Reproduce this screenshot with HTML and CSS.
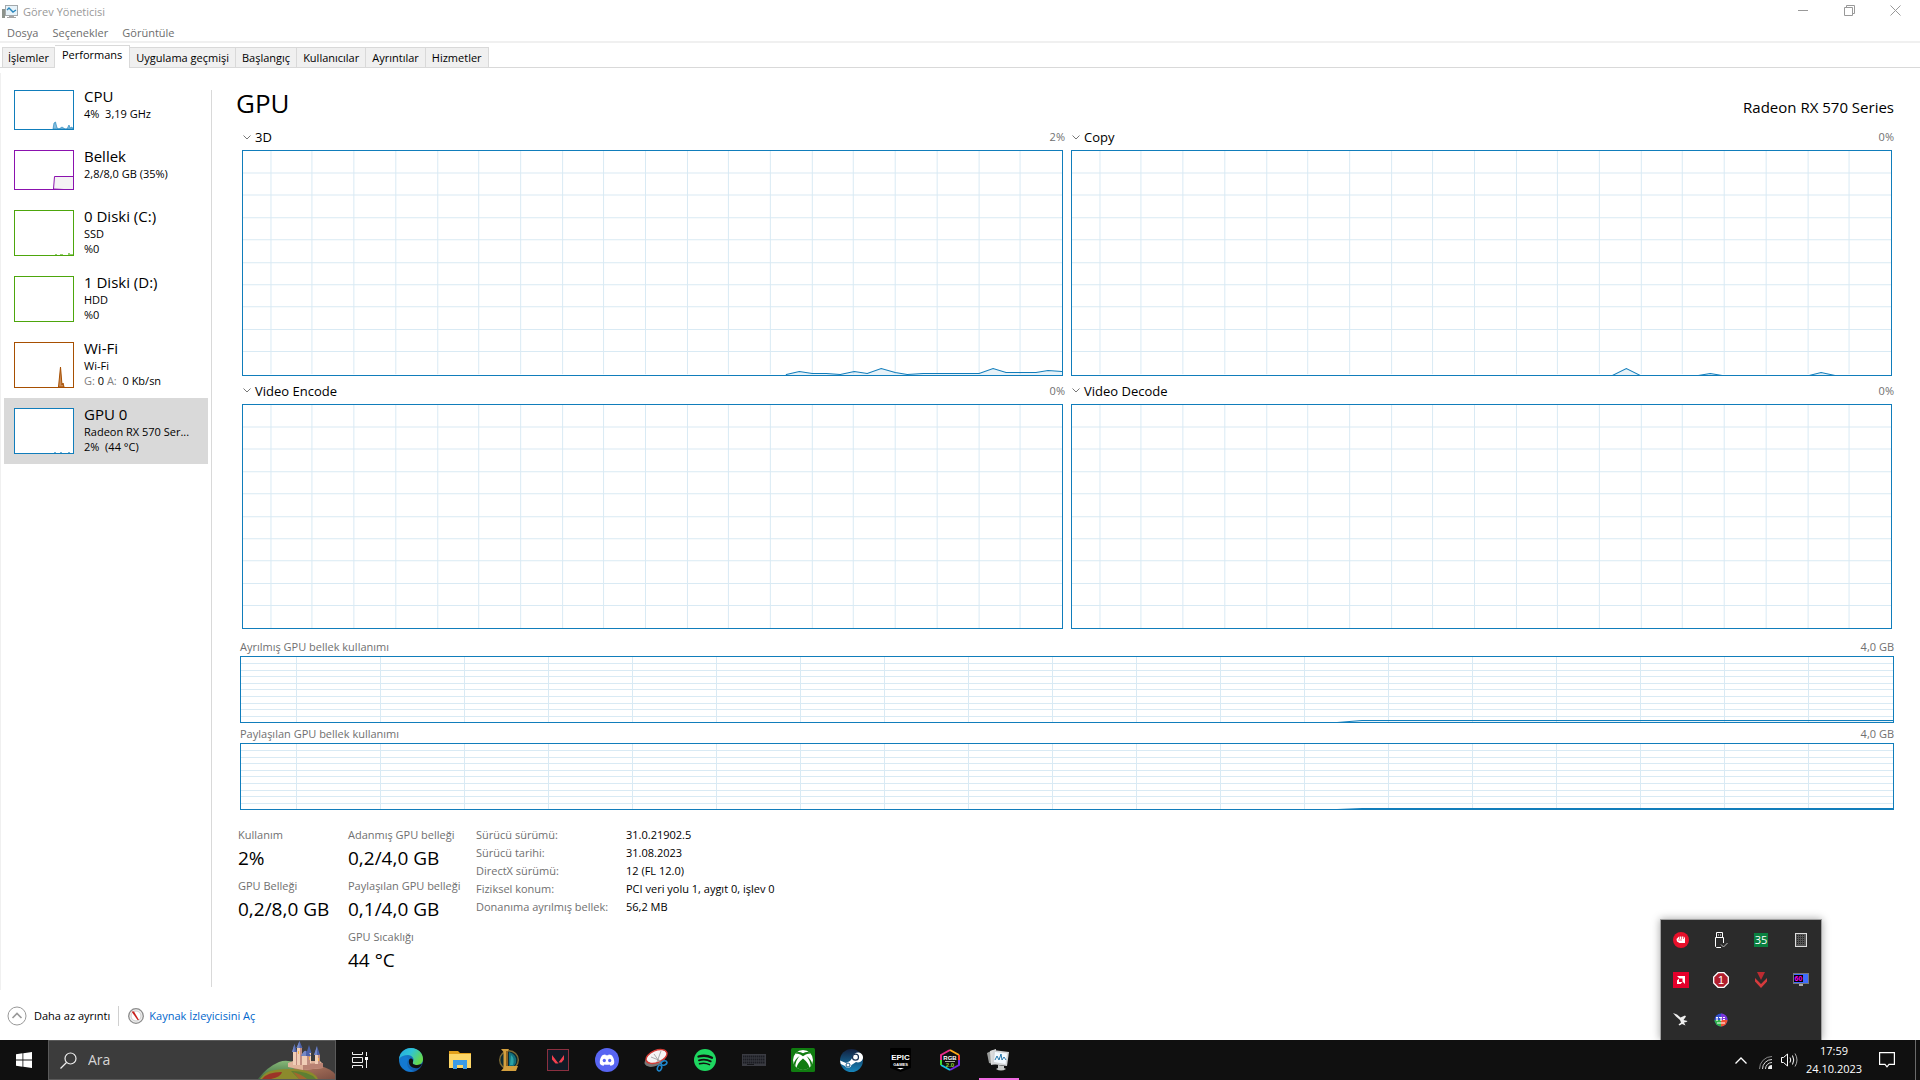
FILE: index.html
```html
<!DOCTYPE html>
<html lang="tr">
<head>
<meta charset="utf-8">
<title>Görev Yöneticisi</title>
<link rel="stylesheet" href="styles.css">
</head>
<body>
<svg class="defs" aria-hidden="true">
  <symbol id="grid-engine" viewBox="0 0 820 224" preserveAspectRatio="none">
    <path class="grid-line" d="M28 0V224M69 0V224M111 0V224M153 0V224M195 0V224M236 0V224M278 0V224M320 0V224M361 0V224M403 0V224M445 0V224M486 0V224M528 0V224M570 0V224M611 0V224M653 0V224M695 0V224M737 0V224M778 0V224M0 22H820M0 44H820M0 67H820M0 89H820M0 112H820M0 134H820M0 156H820M0 179H820M0 201H820"/>
  </symbol>
  <symbol id="grid-memory" viewBox="0 0 1652 65" preserveAspectRatio="none">
    <path class="grid-line" d="M55 0V65M139 0V65M223 0V65M307 0V65M391 0V65M475 0V65M559 0V65M643 0V65M727 0V65M811 0V65M895 0V65M979 0V65M1063 0V65M1147 0V65M1231 0V65M1315 0V65M1399 0V65M1483 0V65M1567 0V65M0 6H1652M0 13H1652M0 19H1652M0 26H1652M0 32H1652M0 39H1652M0 46H1652M0 52H1652M0 59H1652"/>
  </symbol>
  <symbol id="chevron" viewBox="0 0 8 5"><path d="M.5 .5L4 4L7.500 .5" fill="none" stroke="#777"/></symbol>
</svg>

<div class="window">
  <header class="titlebar">
    <svg class="app-icon" width="16" height="16" viewBox="0 0 16 16"><rect x="0" y="5" width="3" height="9" fill="#8d938c"/><rect x="3.500" y="1.500" width="12" height="10" fill="#e7f3fa" stroke="#a3a8ab"/><path d="M5 6l2-2 4 4 3-2" fill="none" stroke="#2b87bd" stroke-width="1.400"/><path d="M7 12h5v1h2v1H5v-1h2z" fill="#a5a5a5"/></svg>
    <h1 class="window-title">Görev Yöneticisi</h1>
    <div class="caption-buttons">
      <button aria-label="Simge durumuna küçült"><svg width="11" height="11" viewBox="0 0 11 11"><path d="M0 5.500H10"/></svg></button>
      <button aria-label="Önceki boyut"><svg width="11" height="11" viewBox="0 0 11 11"><path d="M.5 2.500H8.500V10.500H.5ZM2.500 2.500V.5H10.500V8.500H8.500"/></svg></button>
      <button aria-label="Kapat"><svg width="11" height="11" viewBox="0 0 11 11"><path d="M.5 .5L10.500 10.500M10.500 .5L.5 10.500"/></svg></button>
    </div>
  </header>
  <nav class="menubar"><button>Dosya</button><button>Seçenekler</button><button>Görüntüle</button></nav>
  <div class="tabs" role="tablist">
    <button role="tab">İşlemler</button>
    <button role="tab" class="active" aria-selected="true">Performans</button>
    <button role="tab">Uygulama geçmişi</button>
    <button role="tab">Başlangıç</button>
    <button role="tab">Kullanıcılar</button>
    <button role="tab">Ayrıntılar</button>
    <button role="tab">Hizmetler</button>
  </div>

  <div class="body">
    <aside class="sidebar">
      <button class="resource">
        <svg class="thumb cpu" viewBox="0 0 58 38"><path d="M38 38L39 32L40.500 31L42 37L44 38L47 36L50 38L52 38L54 34L55 37L57 36L58 38Z" fill="#117dbb" fill-opacity=".5" stroke="#117dbb" stroke-width=".6"/></svg>
        <span class="info"><span class="name">CPU</span><span>4%&nbsp; 3,19 GHz</span></span>
      </button>
      <button class="resource">
        <svg class="thumb memory" viewBox="0 0 58 38"><path d="M38.500 38L39.500 25.500H59V39Z" fill="#f4f2f4" stroke="#8b12ae" stroke-width="1"/></svg>
        <span class="info"><span class="name">Bellek</span><span>2,8/8,0 GB (35%)</span></span>
      </button>
      <button class="resource">
        <svg class="thumb disk tall" viewBox="0 0 58 44"><path d="M40 43.500H42M45 43.500H48M53 42.500H55M53 43.500H58" stroke="#4da60c" stroke-opacity=".6"/></svg>
        <span class="info"><span class="name">0 Diski (C:)</span><span>SSD</span><span>%0</span></span>
      </button>
      <button class="resource">
        <svg class="thumb disk tall" viewBox="0 0 58 44"></svg>
        <span class="info"><span class="name">1 Diski (D:)</span><span>HDD</span><span>%0</span></span>
      </button>
      <button class="resource">
        <svg class="thumb wifi tall" viewBox="0 0 58 44"><path d="M43.500 44L45.500 24L47 42L48 40L49 44Z" fill="#c98b58" stroke="#a74f01"/></svg>
        <span class="info"><span class="name">Wi-Fi</span><span>Wi-Fi</span><span><i>G:</i> 0 <i>A:</i>&nbsp; 0 Kb/sn</span></span>
      </button>
      <button class="resource selected">
        <svg class="thumb gpu tall" viewBox="0 0 58 44"><path d="M39 43.500H41M45 43.500H47M53 43.500H55" stroke="#117dbb" stroke-opacity=".6"/></svg>
        <span class="info"><span class="name">GPU 0</span><span>Radeon RX 570 Ser...</span><span>2%&nbsp; (44 °C)</span></span>
      </button>
    </aside>

    <main class="content">
      <div class="heading"><h2>GPU</h2><span>Radeon RX 570 Series</span></div>
      <div class="engines">
        <section class="engine">
          <div class="engine-head"><button><svg width="8" height="5"><use href="#chevron"/></svg>3D</button><span>2%</span></div>
          <svg class="plot" viewBox="0 0 820 224" preserveAspectRatio="none"><use href="#grid-engine" width="820" height="224"/><path class="series" d="M544 224L557 221L570 223L584 223L598 224L612 221L625 223L639 218L653 222L665 224L681 223L737 223L751 218L764 222L794 222L806 220L822 221V226H544Z"/></svg>
        </section>
        <section class="engine">
          <div class="engine-head"><button><svg width="8" height="5"><use href="#chevron"/></svg>Copy</button><span>0%</span></div>
          <svg class="plot" viewBox="0 0 820 224" preserveAspectRatio="none"><use href="#grid-engine" width="820" height="224"/><path class="series" d="M541 225L555 218L569 225Z"/><path class="series" d="M627 225L639 223L651 225ZM738 225L750 222L764 225Z"/></svg>
        </section>
        <section class="engine">
          <div class="engine-head"><button><svg width="8" height="5"><use href="#chevron"/></svg>Video Encode</button><span>0%</span></div>
          <svg class="plot" viewBox="0 0 820 224" preserveAspectRatio="none"><use href="#grid-engine" width="820" height="224"/></svg>
        </section>
        <section class="engine">
          <div class="engine-head"><button><svg width="8" height="5"><use href="#chevron"/></svg>Video Decode</button><span>0%</span></div>
          <svg class="plot" viewBox="0 0 820 224" preserveAspectRatio="none"><use href="#grid-engine" width="820" height="224"/></svg>
        </section>
      </div>
      <section class="memory-chart">
        <div class="memory-head first"><span>Ayrılmış GPU bellek kullanımı</span><span>4,0 GB</span></div>
        <svg class="plot" viewBox="0 0 1652 65" preserveAspectRatio="none"><use href="#grid-memory" width="1652" height="65"/><path class="series" d="M1096 65.500L1121 63.500H1654V66H1096Z"/></svg>
      </section>
      <section class="memory-chart">
        <div class="memory-head"><span>Paylaşılan GPU bellek kullanımı</span><span>4,0 GB</span></div>
        <svg class="plot" viewBox="0 0 1652 65" preserveAspectRatio="none"><use href="#grid-memory" width="1652" height="65"/><path class="series" d="M1096 65.500L1121 64.500H1654V66H1096Z"/></svg>
      </section>
      <div class="stats">
        <dl class="figures">
          <dt>Kullanım</dt><dd>2%</dd>
          <dt>GPU Belleği</dt><dd>0,2/8,0 GB</dd>
        </dl>
        <dl class="figures">
          <dt>Adanmış GPU belleği</dt><dd>0,2/4,0 GB</dd>
          <dt>Paylaşılan GPU belleği</dt><dd>0,1/4,0 GB</dd>
          <dt>GPU Sıcaklığı</dt><dd>44 °C</dd>
        </dl>
        <dl class="details">
          <dt>Sürücü sürümü:</dt><dd>31.0.21902.5</dd>
          <dt>Sürücü tarihi:</dt><dd>31.08.2023</dd>
          <dt>DirectX sürümü:</dt><dd>12 (FL 12.0)</dd>
          <dt>Fiziksel konum:</dt><dd>PCI veri yolu 1, aygıt 0, işlev 0</dd>
          <dt>Donanıma ayrılmış bellek:</dt><dd>56,2 MB</dd>
        </dl>
      </div>
    </main>
  </div>

  <footer class="footer">
    <button class="less"><svg width="20" height="20" viewBox="0 0 20 20" fill="none"><circle cx="10" cy="10" r="9" stroke="#999"/><path d="M5.500 12L10 7.500L14.500 12" stroke="#999" stroke-width="1.600"/></svg>Daha az ayrıntı</button>
    <a href="#"><svg width="16" height="16" viewBox="0 0 16 16"><circle cx="8" cy="8" r="7.300" fill="#eee" stroke="#8c8c8c" stroke-width="1.300"/><circle cx="8" cy="8" r="5" fill="#fff" stroke="#ccc"/><path d="M3.500 3.500L6 3.500L11 12L9.500 12Z" fill="#c8201c"/></svg>Kaynak İzleyicisini Aç</a>
  </footer>
</div>

<div class="taskbar">
  <button class="start" aria-label="Başlat"><svg width="16" height="16" viewBox="0 0 16 16" fill="#fff"><path d="M0 2.200L6.500 1.300V7.600H0ZM7.300 1.200L16 0V7.600H7.300ZM0 8.400H6.500V14.700L0 13.800ZM7.300 8.400H16V16L7.300 14.800Z"/></svg></button>
  <label class="search">
    <svg width="17" height="17" viewBox="0 0 17 17" fill="none" stroke="#eee" stroke-width="1.200"><circle cx="10.500" cy="6.500" r="5.500"/><path d="M6.500 10.500L.5 16.500"/></svg>
    <input type="text" placeholder="Ara" aria-label="Ara">
    <svg class="castle" width="78" height="38" viewBox="0 0 78 38">
      <defs>
        <linearGradient id="hill" x1="0" y1="0" x2="0" y2="1"><stop stop-color="#86b878"/><stop offset="1" stop-color="#3f6b3f"/></linearGradient>
        <linearGradient id="slope" x1="0" y1="0" x2="1" y2="1"><stop stop-color="#b57c64"/><stop offset="1" stop-color="#7c4f42"/></linearGradient>
      </defs>
      <path d="M1 38Q10 26 22 21Q30 18 38 22Q50 28 56 38Z" fill="url(#hill)"/>
      <path d="M36 27Q52 24 64 25Q74 28 78 33V38H52Z" fill="url(#slope)"/>
      <path d="M3 38Q8 30 18 29Q32 27 46 29Q58 31 61 38Z" fill="#8c8a2c"/>
      <path d="M5 38Q10 31 25 31Q24 36 14 38Z" fill="#9c3427"/>
      <path d="M34 30Q52 30 59 38H42Z" fill="#5d7f33"/>
      <path d="M36 31Q44 33 50 38H42Z" fill="#a2672e"/>
      <path d="M31 22L36 20H63L66 23V27L46 29L31 26Z" fill="#e0b39a"/>
      <path d="M46 23L66 22V27L46 29Z" fill="#b98273"/>
      <path d="M36 11H40V24H36ZM40 6H45V24H40ZM45 14H53V24H45ZM51 12H54V22H51ZM58 13H63V23H58Z" fill="#f0cdb6"/>
      <path d="M43 6H45V24H43ZM50 14H53V24H50ZM61 13H63V23H61ZM39 11H40V24H39Z" fill="#c08c80"/>
      <path d="M37.500 3L40 11H35ZM42.500 0L45.500 7H39.500ZM52 4L54.500 12H49.500ZM60 5L63 14H57ZM44 15Q49 5 54 15Z" fill="#4b61a8"/>
      <path d="M42.500 0V7H39.500ZM60 5V14H57ZM37.500 3V11H35ZM44 15Q47 9 49 10V15Z" fill="#7688c4"/>
      <path d="M41 10H42V13H41ZM52 16H53V19H52ZM61 17H62V20H61Z" fill="#f4b54c"/>
    </svg>
  </label>
  <button class="task-view" aria-label="Görev Görünümü"><svg width="17" height="16" viewBox="0 0 17 16" fill="none" stroke="#eee"><path d="M.5 0V2.500H10.500V0M.5 16V13.500H10.500V16M.5 5.500H10.500V10.500H.5ZM14.500 0V4M14.500 8V16"/><path d="M13 5H16V8H13Z" fill="#fff" stroke="none"/></svg></button>
  <div class="apps">
    <button aria-label="Microsoft Edge"><svg width="24" height="24" viewBox="0 0 24 24"><defs><linearGradient id="edge-top" x1="0" y1="0" x2="1" y2=".5"><stop stop-color="#25a7df"/><stop offset=".5" stop-color="#2fc4d6"/><stop offset="1" stop-color="#65d94e"/></linearGradient><linearGradient id="edge-base" x1="0" y1="0" x2="1" y2="1"><stop stop-color="#1889d8"/><stop offset="1" stop-color="#124e9f"/></linearGradient></defs><circle cx="12" cy="12" r="12" fill="url(#edge-base)"/><path d="M0 11C1 4 6 0 12 0C19 0 24 5 24 11C24 15 21 17 18 17C15 17 13 16 14 14C16 11 13 7 9 7C5 7 2 8 0 11Z" fill="url(#edge-top)"/><path d="M14 14C13 16 15 17 18 17C20 17 22 16 23 16C22 19 19 21 16 20C12 20 9 16 10 12C11 10 13 10 14 12Z" fill="#111"/><path d="M10 11C6 14 8 22 16 23C9 26 1 20 1 14C2 9 7 7 10 11Z" fill="#1379d2"/></svg></button>
    <button aria-label="Dosya Gezgini"><svg width="22" height="20" viewBox="0 0 22 20"><path d="M0 1H9L11 3H22V18H0Z" fill="#e3a01b"/><path d="M0 4H22V18H0Z" fill="#fdd667"/><path d="M4 19V10H18V19H14V15H8V19Z" fill="#3c9be5"/></svg></button>
    <button aria-label="League of Legends"><svg width="22" height="24" viewBox="0 0 22 24"><circle cx="11" cy="12" r="9.300" fill="#0b2a33" stroke="#7d6a35" stroke-width="1.400"/><path d="M11 4Q20 7 18 15L16 18H11Z" fill="#13707d"/><path d="M13 7Q17 10 15 17H12Z" fill="#2ba3a6"/><path d="M3 1H11L10 3V18H20L18 23H3L5.500 20V4Z" fill="#d4a03e"/><path d="M8 3H10V18H8Z" fill="#8f6322"/></svg></button>
    <button aria-label="Valorant"><svg width="22" height="22" viewBox="0 0 22 22"><rect x=".5" y=".5" width="21" height="21" fill="#111a26" stroke="#8b3040"/><path d="M5 6L11.500 14.500H8.500L5 10.500ZM17 6V10.500L14.500 13.500H11.500Z" fill="#f4404f"/></svg></button>
    <button aria-label="Discord"><svg width="24" height="24" viewBox="0 0 24 24"><circle cx="12" cy="12" r="12" fill="#5865f2"/><path d="M7 7.500Q9 6.400 10.300 6.500L10.800 7.300H13.200L13.700 6.500Q15.500 6.500 17 7.500Q20 12 19 16Q17.500 17.500 15.500 17.700L14.600 16.400Q12 17 9.400 16.400L8.500 17.700Q6.500 17.500 5 16Q4 12 7 7.500Z" fill="#fff"/><ellipse cx="9.300" cy="12.500" rx="1.600" ry="1.800" fill="#5865f2"/><ellipse cx="14.700" cy="12.500" rx="1.600" ry="1.800" fill="#5865f2"/></svg></button>
    <button aria-label="Ekran Alıntısı Aracı"><svg width="24" height="24" viewBox="0 0 24 24"><ellipse cx="11" cy="12" rx="11" ry="6" transform="rotate(-22 11 12)" fill="#777"/><ellipse cx="12.500" cy="8.500" rx="11" ry="6" transform="rotate(-22 12.500 8.500)" fill="#f5f5f5" stroke="#d33b35" stroke-width="1.400"/><path d="M7 9L17 13M10 6L17 16M17 3L13 14" stroke="#999" stroke-width=".8"/><g fill="none" stroke="#1f86cc" stroke-width="1.600"><ellipse cx="20" cy="15" rx="3" ry="2" transform="rotate(-20 20 15)"/><ellipse cx="15.500" cy="20" rx="2" ry="3" transform="rotate(20 15.500 20)"/></g></svg></button>
    <button aria-label="Spotify"><svg width="22" height="22" viewBox="0 0 22 22"><circle cx="11" cy="11" r="11" fill="#1ed760"/><g fill="none" stroke="#111" stroke-linecap="round"><path d="M4.500 7.500Q12 5.500 18 8.800" stroke-width="2.300"/><path d="M5 11.300Q11.500 9.500 16.700 12.300" stroke-width="1.900"/><path d="M5.500 14.800Q11 13.400 15.500 15.700" stroke-width="1.500"/></g></svg></button>
    <button aria-label="Klavye"><svg width="24" height="12" viewBox="0 0 24 12"><rect width="24" height="12" fill="#3a3b42"/><path d="M1 2.500H23M1 5.500H23M1 8.500H23" stroke="#1b1c22" stroke-width="2" stroke-dasharray="1.500 .5"/><path d="M5 10.500H12" stroke="#17181b"/></svg></button>
    <button aria-label="Xbox"><svg width="24" height="24" viewBox="0 0 24 24"><rect width="24" height="24" rx="1.500" fill="#107c10"/><circle cx="12" cy="12" r="10" fill="#fff"/><path d="M5.500 4.300Q8.500 3.200 12 5.300Q15.500 3.200 18.500 4.300Q20 6 17 5.800Q15 6 12 8.300Q9 6 7 5.800Q4 6 5.500 4.300Z" fill="#107c10"/><path d="M8.600 8Q4.500 12.500 4.300 18.600L2.800 16Q3.500 11.500 8.600 8ZM15.400 8Q19.500 12.500 19.700 18.600L21.200 16Q20.500 11.500 15.400 8Z" fill="#107c10"/><path d="M12 10.500Q17.500 15 18.500 19.500Q15.500 22 12 22Q8.500 22 5.500 19.500Q6.500 15 12 10.500Z" fill="#107c10"/></svg></button>
    <button aria-label="Steam"><svg width="23" height="23" viewBox="0 0 23 23"><defs><linearGradient id="steam" x1="0" y1="0" x2="0" y2="1"><stop stop-color="#12203f"/><stop offset="1" stop-color="#1685bb"/></linearGradient></defs><circle cx="11.500" cy="11.500" r="11.500" fill="url(#steam)"/><path d="M0 11.500L6 14L10 12L13 8A5 5 0 1 1 16 13L11.500 16A3.500 3.500 0 0 1 5 17L.8 15Z" fill="#fff"/><circle cx="15.500" cy="8.200" r="3" fill="#fff" stroke="#173052" stroke-width="1.200"/><circle cx="8" cy="16" r="2" fill="#fff" stroke="#1a5b88"/></svg></button>
    <button aria-label="Epic Games"><svg width="21" height="24" viewBox="0 0 21 24"><path d="M0 1Q0 0 1 0H20Q21 0 21 1V20L10.500 24L0 20Z" fill="#000"/><text x="10.500" y="12" class="epic-name">EPIC</text><text x="10.500" y="18" class="epic-games">GAMES</text><path d="M7 20H14L10.500 21.500Z" fill="#fff"/></svg></button>
    <button aria-label="RGB Fusion"><svg width="22" height="22" viewBox="0 0 22 22"><g fill="none" stroke-width="2"><path d="M2 11V6L11 1" stroke="#e92c88"/><path d="M11 1L20 6" stroke="#ffab17"/><path d="M20 6V11" stroke="#ff3c2d"/><path d="M20 11V16L11 21" stroke="#7329e5"/><path d="M11 21L2 16" stroke="#19c5e8"/><path d="M2 16V11" stroke="#3ddb37"/></g><text x="11" y="11" class="rgb-name">RGB</text><path d="M6 12.500H16" stroke="#aaa"/><text x="11" y="18" class="rgb-version">2.0</text></svg></button>
    <button aria-label="Görev Yöneticisi" class="running"><svg width="24" height="22" viewBox="0 0 24 22"><path d="M0 4L6 1V15L2 14Z" fill="#9b9d9b"/><path d="M3 2L9 0V15L4 16Z" fill="#dcdcdc"/><path d="M6 1L22 3L20 17L5 15Z" fill="#d3d5d7"/><path d="M8 3L20 4.500L18.500 15L7 13Z" fill="#f4faff"/><path d="M8 11L10 7L12 11L14 5L15 11L17 8L19 11" fill="none" stroke="#2476aa"/><path d="M11 16L17 17V19L19 20Q14 23 9 20L11 19Z" fill="#c8cac9"/></svg></button>
  </div>
  <div class="tray">
    <button class="tray-up" aria-label="Gizli simgeleri göster"><svg width="12" height="7" viewBox="0 0 12 7" fill="none" stroke="#fff" stroke-width="1.300"><path d="M.5 6.500L6 1L11.500 6.500"/></svg></button>
    <button class="tray-wifi" aria-label="Ağ"><svg width="13" height="13" viewBox="0 0 13 13" fill="none" stroke="#aaa"><path d="M.5 13A12.500 12.500 0 0 1 13 .5" stroke="#888"/><path d="M3.500 13A9.500 9.500 0 0 1 13 3.500M6.500 13A6.500 6.500 0 0 1 13 6.500" stroke="#ddd"/><path d="M9 13A4 4 0 0 1 13 9V13Z" fill="#eee" stroke="none"/></svg></button>
    <button class="tray-sound" aria-label="Ses"><svg width="17" height="14" viewBox="0 0 17 14" fill="none" stroke="#fff"><path d="M.5 4.500H2.500L6.500 1V13L2.500 9.500H.5Z"/><path d="M9 4.500Q10.500 7 9 9.500M11.500 2.500Q14 7 11.500 11.500"/><path d="M14 .5Q18 7 14 13.500" stroke="#aaa"/></svg></button>
    <button class="clock"><time>17:59</time><span>24.10.2023</span></button>
    <button class="notify" aria-label="Bildirimler"><svg width="16" height="16" viewBox="0 0 16 16" fill="none" stroke="#fff" stroke-width="1.200"><path d="M.6 .6H15.400V12.400H10L8 14.800L6 12.400H.6Z"/></svg></button>
    <button class="show-desktop" aria-label="Masaüstünü göster"></button>
  </div>

  <div class="tray-popup">
    <button aria-label="MSI"><svg width="16" height="16" viewBox="0 0 16 16"><circle cx="8" cy="8" r="8" fill="#e7102a"/><path d="M3.500 7L5 5.500L6 4.500H11L12 6V11H6.500L4 9.500Z" fill="#fff"/><path d="M6.500 4V7M8.500 4V7M10.500 4V7M5 8H9" stroke="#e7102a" stroke-width=".6"/></svg></button>
    <button aria-label="USB"><svg width="14" height="16" viewBox="0 0 14 16" fill="none" stroke="#fff"><path d="M2.500 5V.5H8.500V5M7 15.500H2.500L1.500 14.500V5.500H9.500V11"/><path d="M4 3H5M6 3H7"/><path d="M7 12.500L9.500 15L13.500 11" stroke="#bbb"/></svg></button>
    <button aria-label="Sıcaklık 35"><span class="temp">35</span></button>
    <button aria-label="İşlemci"><svg width="12" height="14" viewBox="0 0 12 14"><rect x=".5" y=".5" width="11" height="13" fill="#555" stroke="#ddd"/><path d="M2 2.500H10M2 4.500H10M2 6.500H10M2 8.500H10M2 10.500H10" stroke="#222" stroke-dasharray="1 1"/></svg></button>
    <button aria-label="AMD"><svg width="16" height="16" viewBox="0 0 16 16"><rect width="16" height="16" fill="#e4002b"/><path d="M4 4H12V12L9.500 9.500V6.500H6.500ZM4 8.500L6 6.500V10H9.500L7.500 12H4Z" fill="#fff"/></svg></button>
    <button aria-label="Uyarı 1"><svg width="16" height="16" viewBox="0 0 16 16"><path d="M5 .7H11L15.300 5V11L11 15.300H5L.7 11V5Z" fill="#b01e2d" stroke="#fff" stroke-width="1.300"/><text x="8" y="12" class="badge-number">1</text></svg></button>
    <button aria-label="Vanguard"><svg width="12" height="16" viewBox="0 0 12 16"><path d="M2 0H10L6 8Z" fill="#bd2b31"/><path d="M0 6L6 12L12 6V9.500L6 16L0 9.500Z" fill="#d63b3d"/></svg></button>
    <button aria-label="60 Hz"><svg width="16" height="14" viewBox="0 0 16 14"><rect x=".5" y=".5" width="15" height="10" fill="#3e6dff" stroke="#777"/><rect x="1" y="2" width="9" height="7" fill="#000"/><text x="5.500" y="8" class="hertz">60</text><path d="M6 11H10V13H6Z" fill="#aaa"/></svg></button>
    <button aria-label="Uçak"><svg width="16" height="14" viewBox="0 0 16 14"><path d="M0 0L4 1.500L7.500 4.500L12 2.500L13 3.500L10.500 7L14.500 8L13.500 9L11 9.500L12.500 12.500L9 11L6.500 12.500L5.500 11.500L8 9.500L7 7L3 3.500Z" fill="#eee"/></svg></button>
    <button aria-label="Aydınlatma"><svg width="14" height="14" viewBox="0 0 14 14"><circle cx="7" cy="7" r="6.500" fill="#3250ce"/><path d="M7 7V.5A6.500 6.500 0 0 1 13.500 7Z" fill="#7c36db"/><path d="M7 7H13.500A6.500 6.500 0 0 1 7 13.500Z" fill="#f05234"/><path d="M7 7V13.500A6.500 6.500 0 0 1 .5 7Z" fill="#30b44a"/><path d="M2 4.500H4M3 5V8M5 4.500H8M7 5V8M9 4.500H11M9 6.500H11M3 10H11" stroke="#fff" stroke-width="1.200"/></svg></button>
  </div>
</div>
</body>
</html>
```
FILE: styles.css
```css
* { box-sizing: border-box; }

body {
  margin: 0;
  min-height: 100vh;
  display: flex;
  flex-direction: column;
  background: #fff;
  color: #000;
  font: 11px/16px "Open Sans", "Noto Sans", sans-serif;
}

button, input {
  margin: 0;
  padding: 0;
  border: 0;
  background: none;
  color: inherit;
  font: inherit;
}

h1, h2, dl, dt, dd { margin: 0; font-weight: 400; }
svg { display: block; flex: none; }
.defs { position: absolute; width: 0; height: 0; }

.window { flex: 1; display: flex; flex-direction: column; }

/* Title bar and menu */
.titlebar { display: flex; align-items: center; height: 24px; padding-left: 2px; color: #999; }
.window-title { flex: 1; margin-left: 5px; font-size: 11px; }
.caption-buttons { display: flex; align-self: flex-start; padding-right: 2px; }
.caption-buttons button {
  width: 46px;
  height: 20px;
  display: flex;
  align-items: center;
  justify-content: center;
}
.caption-buttons svg { fill: none; stroke: #999; }
.menubar {
  display: flex;
  gap: 14px;
  height: 19px;
  padding-left: 7px;
  border-bottom: 2px solid #f0f0f0;
  color: #6d6d6d;
}

/* Tabs */
.tabs {
  display: flex;
  align-items: flex-end;
  height: 25px;
  padding: 2px 0 0 2px;
  border-bottom: 1px solid #d9d9d9;
}
.tabs button {
  height: 20px;
  padding: 0 6px;
  border: 1px solid #d9d9d9;
  border-width: 1px 1px 0 0;
  background: #f0f0f0;
}
.tabs button:first-child { border-left-width: 1px; padding: 0 5px; }
.tabs .active {
  height: 23px;
  margin-bottom: -1px;
  padding: 0 7px 4px;
  background: #fff;
}

.body { flex: 1; display: flex; border-left: 1px solid #f0f0f0; margin-top: 5px; }

/* Resource list */
.sidebar {
  position: relative;
  width: 211px;
  padding: 7px 4px 0 3px;
}
.sidebar::after {
  content: "";
  position: absolute;
  top: 17px;
  right: 0;
  bottom: 3px;
  width: 1px;
  background: #d9d9d9;
}
.resource {
  display: flex;
  gap: 10px;
  width: 100%;
  padding: 10px;
  text-align: left;
}
.selected { background: #d9d9d9; }
.thumb { width: 60px; height: 40px; border: 1px solid; background: #fff; }
.tall { height: 46px; }
.cpu, .gpu { border-color: #117dbb; }
.memory { border-color: #8b12ae; }
.disk { border-color: #4da60c; }
.wifi { border-color: #a74f01; }
.info { display: flex; flex-direction: column; height: 40px; line-height: 15px; white-space: nowrap; }
.name { margin-top: -3px; font-size: 15px; line-height: 19px; }
.info i { color: #808080; font-style: normal; }

/* Performance details */
.content { flex: 1; display: flex; flex-direction: column; padding: 12px 26px 0 24px; }
.heading {
  display: flex;
  align-items: center;
  justify-content: space-between;
  height: 40px;
  padding-bottom: 4px;
  font-size: 15px;
}
.heading h2 { font-size: 26px; line-height: 36px; }
.heading span { margin-top: 8px; }
.engines {
  flex: 1;
  display: grid;
  grid-template-columns: 1fr 1fr;
  grid-template-rows: 1fr 1fr;
  gap: 2px 4px;
  margin: -1px 0 0 4px;
}
.engine { display: flex; flex-direction: column; min-height: 140px; padding: 0 2px; }
.engine-head {
  display: flex;
  align-items: center;
  justify-content: space-between;
  height: 26px;
  margin-right: -2px;
}
.engine-head button { display: flex; align-items: center; gap: 4px; font-size: 13px; }
.engine-head button svg { margin-left: 1px; }
.engine-head span { color: #707070; }
.plot { width: 100%; border: 1px solid #117dbb; }
.engine .plot { flex: 1 1 0; height: 0; min-height: 0; }
.grid-line {
  fill: none;
  stroke: #d9eaf4;
  vector-effect: non-scaling-stroke;
  shape-rendering: crispEdges;
}
.series {
  fill: #117dbb;
  fill-opacity: .1;
  stroke: #117dbb;
  vector-effect: non-scaling-stroke;
}
.memory-chart { margin-left: 4px; }
.memory-chart .plot { height: 67px; }
.memory-head { display: flex; justify-content: space-between; height: 20px; padding-top: 3px; color: #707070; }
.memory-head.first { height: 27px; padding-top: 10px; }

.stats { display: flex; height: 180px; padding: 17px 0 0 2px; }
.stats dt { color: #707070; white-space: nowrap; }
.figures { width: 110px; }
.figures + .figures { width: 128px; }
.figures dd { height: 35px; padding-top: 3px; font-size: 19px; line-height: 24px; }
.details { display: grid; grid-template-columns: 150px auto; grid-auto-rows: 18px; }

/* Footer */
.footer { display: flex; align-items: center; height: 50px; padding: 1px 0 0 7px; }
.footer button, .footer a { display: flex; align-items: center; gap: 7px; }
.footer .less { padding-right: 8px; border-right: 1px solid #d0d0d0; }
.footer a { margin-left: 9px; gap: 5px; color: #0066cc; text-decoration: none; }

/* Taskbar */
.taskbar { position: relative; display: flex; height: 40px; background: #101010; color: #fff; }
.taskbar button { display: flex; align-items: center; justify-content: center; }
.start, .task-view { width: 48px; }
.search {
  display: flex;
  align-items: center;
  width: 288px;
  padding-left: 11px;
  border: 1px solid #5a5a5a;
  background: #3c3c3c;
}
.search input { flex: 1; min-width: 0; padding-left: 11px; font-size: 14px; outline: 0; }
.search input::placeholder { color: #d6d6d6; opacity: 1; }
.castle { align-self: flex-end; }
.apps { display: flex; margin-left: 2px; }
.apps button { width: 49px; }
.apps .running { position: relative; }
.running::after {
  content: "";
  position: absolute;
  left: 5px;
  right: 4px;
  bottom: 0;
  height: 2px;
  background: #f06ae0;
}
.epic-name, .epic-games, .rgb-name, .rgb-version, .badge-number, .hertz {
  fill: #fff;
  text-anchor: middle;
  font-family: "Liberation Sans", sans-serif;
  font-weight: 700;
}
.epic-name { font-size: 8px; }
.epic-games { font-size: 4px; }
.rgb-name { font-size: 6px; }
.rgb-version { font-size: 6px; fill: #8bd530; }
.badge-number { font-size: 11px; font-weight: 400; }
.hertz { font-size: 7px; fill: #f0f; }

.tray { display: flex; margin-left: auto; }
.tray-up, .tray-wifi, .tray-sound { width: 24px; }
.tray-wifi { padding-top: 4px; }
.taskbar .clock { flex-direction: column; width: 66px; line-height: 18px; }
.notify { width: 40px; }
.show-desktop { width: 5px; border-left: 1px solid #6a6a6a; }
.taskbar .show-desktop { margin-left: 8px; border-left: 1px solid #6a6a6a; }

.tray-popup {
  position: absolute;
  right: 98px;
  bottom: 40px;
  display: grid;
  grid-template-columns: repeat(4, 40px);
  grid-auto-rows: 40px;
  border: 1px solid #a0a0a0;
  border-bottom: 0;
  background: #2b2b2b;
  box-shadow: 0 0 8px rgba(0, 0, 0, .35);
  clip-path: inset(-12px -12px 0 -12px);
}
.temp { width: 14px; background: #0a8040; line-height: 14px; text-align: center; }
```
